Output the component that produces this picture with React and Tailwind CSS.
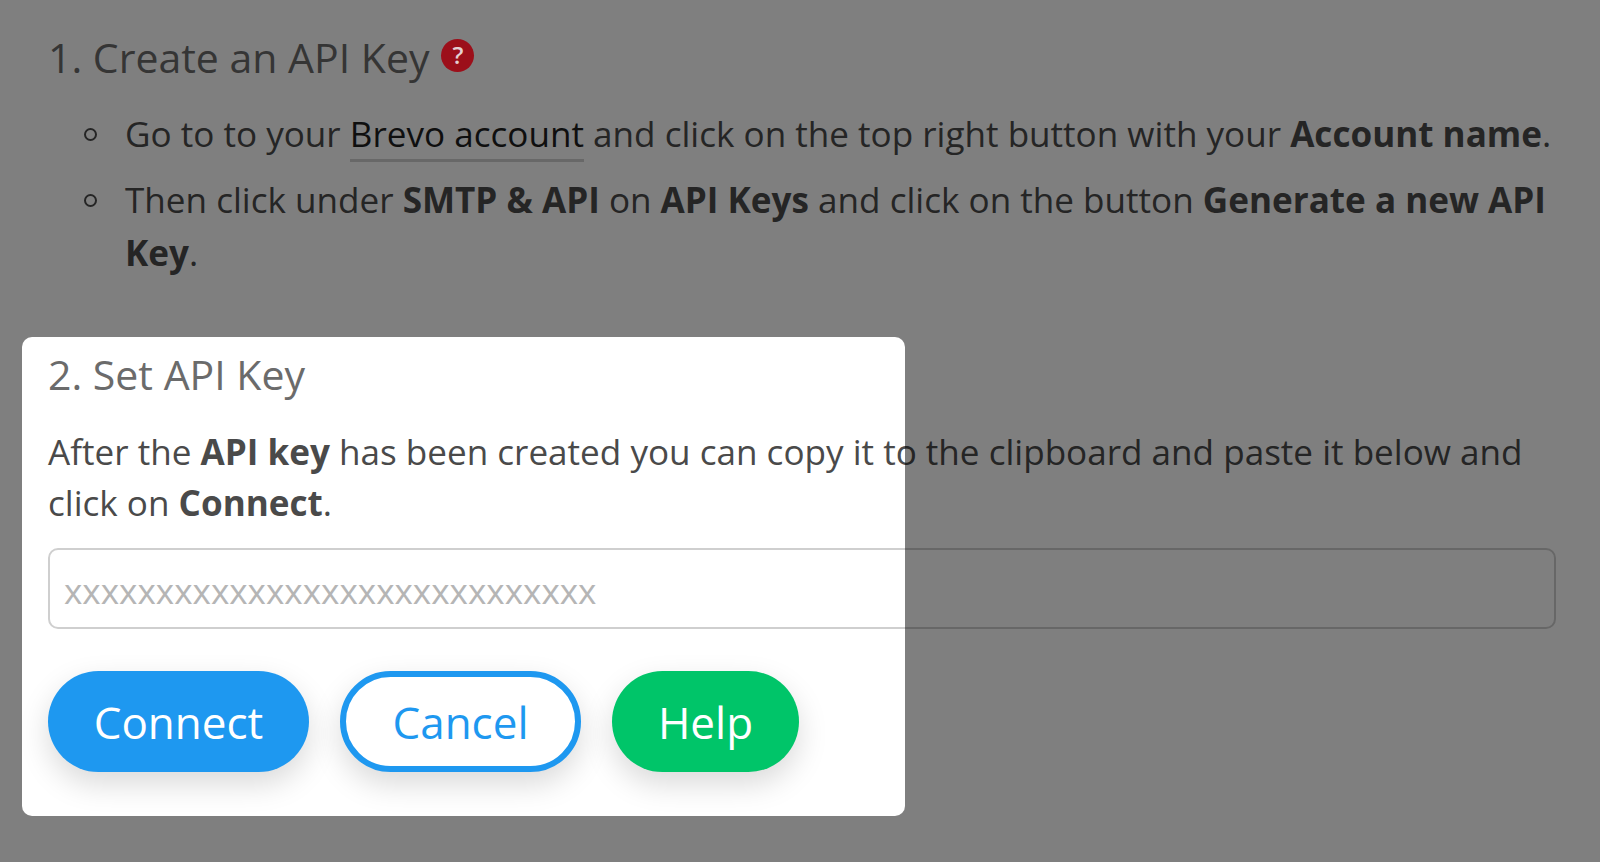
const font = { fontFamily: '"Open Sans", "Noto Sans", sans-serif' };

function HelpDot() {
  return (
    <span className="relative z-10 ml-[12px] inline-flex h-[33px] w-[33px] items-center justify-center rounded-full bg-[#9c0f1a] align-[9px] text-[24px] leading-none font-semibold text-[#e4d0d2]">
      ?
    </span>
  );
}

function Bullet({ children }) {
  return (
    <li className="flex">
      <span className="mt-[21px] mr-[28px] ml-[1px] h-[13px] w-[13px] shrink-0 rounded-full border-2 border-[#4a4a4a]" />
      <div>{children}</div>
    </li>
  );
}

export default function App() {
  return (
    <div className="relative h-[862px] w-[1600px] overflow-hidden bg-white text-[#4a4a4a]" style={font}>
      <div className="flex flex-col px-[48px] pt-[29px] pr-[44px]">
        <h2 className="text-[41px] leading-[56px] font-normal text-[#6b6b6b]">
          1. Create an API Key
          <HelpDot />
        </h2>
        <ul className="mt-[22px] ml-[35px] flex flex-col gap-[13px] text-[35.1px] leading-[53px]">
          <Bullet>
            Go to to your{' '}
            <a className="border-b-[3px] border-[#d0d0d0] pb-[2px] text-[#1f1f1f]">Brevo account</a>{' '}
            and click on the top right button with your <b>Account name</b>.
          </Bullet>
          <Bullet>
            Then click under <b>SMTP &amp; API</b> on <b>API Keys</b> and click on the button{' '}
            <b>Generate a new API Key</b>.
          </Bullet>
        </ul>
        <h2 className="mt-[67px] text-[41px] leading-[56px] font-normal text-[#6b6b6b]">2. Set API Key</h2>
        <p className="mt-[24px] text-[35.1px] leading-[51px]">
          After the <b>API key</b> has been created you can copy it to the clipboard and paste it below and
          click on <b>Connect</b>.
        </p>
        <input
          readOnly
          placeholder="xxxxxxxxxxxxxxxxxxxxxxxxxxxxx"
          className="mt-[20px] h-[81px] w-full rounded-[10px] border-2 border-[#cfcfcf] px-[14px] pt-[3px] text-[35.1px] placeholder:text-[#b5b5b5]"
        />
        <div className="mt-[42px] flex gap-[31px] text-[44px]">
          <button className="h-[101px] w-[261px] rounded-full bg-[#1e98f0] text-white shadow-[0_12px_30px_rgba(0,0,0,0.15)]">
            Connect
          </button>
          <button className="h-[101px] w-[241px] rounded-full border-[6px] border-[#1e98f0] bg-white text-[#1e98f0] shadow-[0_12px_30px_rgba(0,0,0,0.15)]">
            Cancel
          </button>
          <button className="h-[101px] w-[187px] rounded-full bg-[#00c569] text-white shadow-[0_12px_30px_rgba(0,0,0,0.15)]">
            Help
          </button>
        </div>
      </div>
      {/* spotlight over step 2, everything else gets dimmed */}
      <div className="pointer-events-none absolute top-[337px] left-[22px] h-[479px] w-[883px] rounded-[10px] shadow-[0_0_0_2000px_rgba(0,0,0,0.5)]" />
    </div>
  );
}
